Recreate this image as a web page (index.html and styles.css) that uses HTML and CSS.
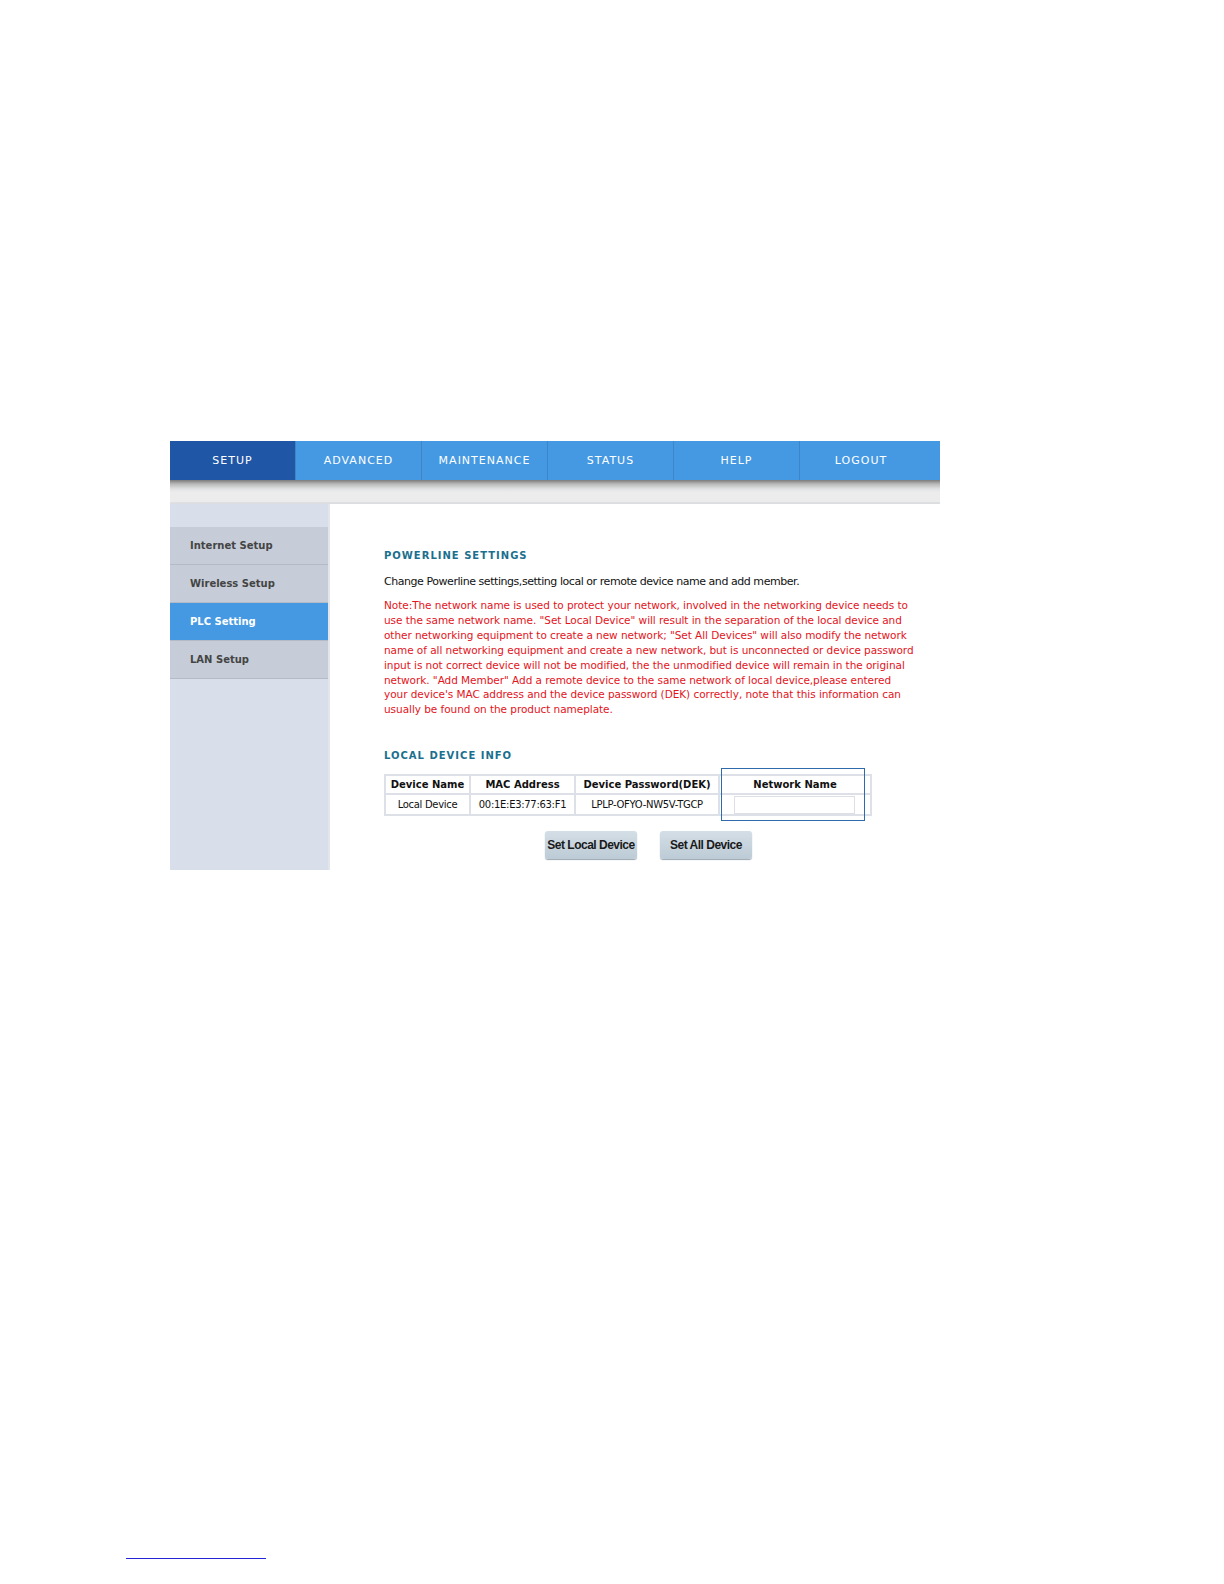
FILE: index.html
```html
<!DOCTYPE html>
<html lang="en">
<head>
    <meta charset="UTF-8">
    <title>Powerline Settings</title>
    <link rel="stylesheet" href="styles.css">
</head>
<body>
    <div class="page">
        <div class="frame">
            <div class="nav">
                <div class="tab active">SETUP</div>
                <div class="tab">ADVANCED</div>
                <div class="tab">MAINTENANCE</div>
                <div class="tab">STATUS</div>
                <div class="tab">HELP</div>
                <div class="tab last">LOGOUT</div>
            </div>
            <div class="band"></div>
            <div class="main">
                <div class="sidebar">
                    <div class="item">Internet Setup</div>
                    <div class="item">Wireless Setup</div>
                    <div class="item selected">PLC Setting</div>
                    <div class="item">LAN Setup</div>
                </div>
                <div class="content">
                    <h2 class="title">POWERLINE SETTINGS</h2>
                    <p class="desc">Change Powerline settings,setting local or remote device name and add member.</p>
                    <p class="note">Note:The network name is used to protect your network, involved in the networking device needs to<br>
                    use the same network name. "Set Local Device" will result in the separation of the local device and<br>
                    other networking equipment to create a new network; "Set All Devices" will also modify the network<br>
                    name of all networking equipment and create a new network, but is unconnected or device password<br>
                    input is not correct device will not be modified, the the unmodified device will remain in the original<br>
                    network. "Add Member" Add a remote device to the same network of local device,please entered<br>
                    your device's MAC address and the device password (DEK) correctly, note that this information can<br>
                    usually be found on the product nameplate.</p>

                    <h2 class="title second">LOCAL DEVICE INFO</h2>
                    <div class="table-wrap">
                        <table class="info">
                            <tr>
                                <th class="c1">Device Name</th>
                                <th class="c2">MAC Address</th>
                                <th class="c3">Device Password(DEK)</th>
                                <th class="c4">Network Name</th>
                            </tr>
                            <tr>
                                <td>Local Device</td>
                                <td>00:1E:E3:77:63:F1</td>
                                <td>LPLP-OFYO-NW5V-TGCP</td>
                                <td><input type="text" class="name-input"></td>
                            </tr>
                        </table>
                        <div class="highlight"></div>
                    </div>
                    <div class="buttons">
                        <button class="btn">Set Local Device</button>
                        <button class="btn">Set All Device</button>
                    </div>
                </div>
            </div>
        </div>
        <div class="footnote-rule"></div>
    </div>
</body>
</html>
```

FILE: styles.css
```css
body {
    margin: 0;
    background: #ffffff;
    font-family: "DejaVu Sans", Verdana, sans-serif;
}

.page {
    padding-top: 441px;
}

.frame {
    width: 770px;
    margin-left: 170px;
}

.nav {
    display: flex;
    height: 39px;
    background-color: #4599e2;
}

.tab {
    width: 125px;
    border-right: 1px solid #3c86c8;
    color: #ffffff;
    font-size: 11px;
    letter-spacing: 1px;
    display: flex;
    align-items: center;
    justify-content: center;
}

.tab.active {
    background-color: #1f56a5;
}

.tab.last {
    flex: 1;
    border-right: none;
    padding-right: 18px;
}

.band {
    height: 24px;
    background: linear-gradient(#7b7b7b 0, #b9b9b9 4px, #e1e2e3 9px, #ececed 12px, #ececed 22px, #d2d3d5 23px, #e4e7ec 24px);
}

.main {
    display: grid;
    grid-template-columns: 160px 1fr;
    height: 366px;
}

.sidebar {
    background-color: #d9dfea;
    padding-top: 23px;
    border-right: 2px solid #e2e5ea;
}

.item {
    height: 37px;
    background-color: #c6cdd8;
    border-bottom: 1px solid #b3bbc7;
    color: #444444;
    font-size: 10px;
    font-weight: bold;
    padding-left: 20px;
    display: flex;
    align-items: center;
}

.item.selected {
    background-color: #4599e2;
    color: #ffffff;
}

.content {
    background: #ffffff;
    padding: 46px 0 0 54px;
}

.title {
    margin: 0;
    font-size: 10px;
    letter-spacing: 1px;
    color: #1b6f8e;
    font-weight: bold;
}

.title.second {
    margin-top: 33px;
}

.desc {
    margin: 14px 0 0 0;
    font-size: 11px;
    color: #111111;
    letter-spacing: -0.45px;
}

.note {
    margin: 10px 0 0 0;
    font-size: 10.5px;
    line-height: 14.9px;
    color: #e3141c;
    letter-spacing: -0.05px;
}

.table-wrap {
    position: relative;
    width: 490px;
    margin-top: 13px;
}

.info {
    border-collapse: collapse;
    border: 2px solid #dde0e6;
    font-size: 10px;
    color: #111111;
}

.info th,
.info td {
    border: 2px solid #dde0e6;
    text-align: center;
    padding: 0;
}

.info th {
    height: 17px;
    font-weight: bold;
}

.info td {
    height: 18px;
    letter-spacing: -0.3px;
}

.c1 { width: 83px; }
.c2 { width: 103px; }
.c3 { width: 142px; }
.c4 { width: 150px; }

.name-input {
    width: 119px;
    height: 16px;
    border: 1px solid #dcdfe4;
    padding: 0;
    margin: 1px 0 0 14px;
    display: block;
}

.highlight {
    position: absolute;
    left: 337px;
    top: -6px;
    width: 142px;
    height: 51px;
    border: 1.5px solid #2f6aaa;
}

.buttons {
    display: flex;
    gap: 23px;
    margin: 15px 0 0 161px;
}

.btn {
    width: 92px;
    height: 28px;
    border: none;
    border-radius: 3px;
    background: linear-gradient(#d4dee6, #bccbd6);
    box-shadow: 0 1px 1px #9aa6b0;
    font-family: "Liberation Sans", Arial, sans-serif;
    font-size: 12px;
    font-weight: bold;
    letter-spacing: -0.5px;
    white-space: nowrap;
    color: #1a1a1a;
    padding: 0;
}

.footnote-rule {
    width: 140px;
    height: 1px;
    background-color: #2424d8;
    margin: 688px 0 0 126px;
}
```
